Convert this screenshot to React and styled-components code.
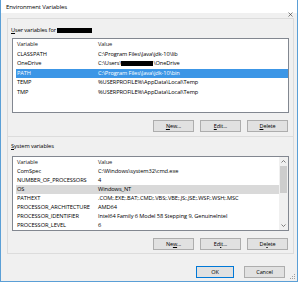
import React from 'react';
import styled, { createGlobalStyle } from 'styled-components';

const GlobalStyle = createGlobalStyle`
  html, body { margin: 0; padding: 0; background: #ffffff; }
  body { font-family: "Open Sans", "Noto Sans", sans-serif; font-size: 5.7px; letter-spacing: -0.1px; color: #000; }
  * { box-sizing: border-box; }
`;

const Window = styled.div`
  position: relative;
  width: 298px;
  height: 282px;
  border: 1px solid #5b9fd6;
  border-top: none;
  background: #f0f0f0;
  display: flex;
  flex-direction: column;
`;

const TitleBar = styled.div`
  height: 13px;
  flex: none;
  background: #ffffff;
  display: flex;
  align-items: center;
  justify-content: space-between;
  padding: 0 2px 0 5px;
  font-size: 6px;
`;

const CloseBox = styled.div`
  width: 9px;
  height: 9px;
  display: flex;
  align-items: center;
  justify-content: center;
  align-self: flex-end;
  margin-bottom: -6px;
`;

const Body = styled.div`
  flex: 1;
  display: flex;
  flex-direction: column;
  padding: 5px 3px 0 6px;
`;

const Frame = styled.div`
  height: ${p => p.$h}px;
  flex: none;
  border: 1px solid #dcdcdc;
  display: flex;
  flex-direction: column;
  padding: 0 4px;
  & + & { margin-top: -1px; }
`;

const Label = styled.div`
  height: 8px;
  line-height: 8px;
  margin: ${p => p.$mt}px 0 ${p => p.$mb}px -1px;
  display: flex;
  align-items: center;
  white-space: nowrap;
`;

const Redact = styled.span`
  display: inline-block;
  width: ${p => p.$w}px;
  height: 5px;
  margin-left: ${p => p.$ml || 0}px;
  background: #000;
  vertical-align: middle;
`;

const List = styled.div`
  position: relative;
  height: 75px;
  flex: none;
  background: #ffffff;
  border: 1px solid #828790;
  padding: 0 0 0 3px;
  overflow: hidden;
`;

const Row = styled.div`
  display: grid;
  grid-template-columns: 81px 181px;
  height: ${p => p.$h}px;
  align-items: center;
  background: ${p => (p.$sel === 'active' ? '#3c96e6' : p.$sel === 'inactive' ? '#d9d9d9' : 'transparent')};
  color: ${p => (p.$sel === 'active' ? '#ffffff' : p.$head ? '#202020' : '#000')};
  white-space: nowrap;
  line-height: 7px;
`;

const Cell = styled.div`
  padding-left: 1px;
  overflow: hidden;
  display: flex;
  align-items: center;
`;

const Scroll = styled.div`
  position: absolute;
  top: 0;
  right: 0;
  bottom: 0;
  width: 9px;
  background: #f0f0f0;
  display: flex;
  flex-direction: column;
  align-items: center;
`;

const Arrow = styled.div`
  height: 9px;
  width: 9px;
  display: flex;
  align-items: center;
  justify-content: center;
  flex: none;
`;

const Thumb = styled.div`
  width: 7px;
  height: 27px;
  background: #cdcdcd;
  flex: none;
`;

const Spacer = styled.div`
  flex: 1;
`;

const Buttons = styled.div`
  display: flex;
  justify-content: flex-end;
  gap: 6px;
  margin: 7px 1px 0 0;
`;

const Button = styled.div`
  width: ${p => p.$w || 41}px;
  height: 12px;
  background: #e1e1e1;
  border: 1px solid ${p => (p.$default ? '#0078d7' : '#adadad')};
  display: flex;
  align-items: center;
  justify-content: center;
  font-size: 5.5px;
  u { text-decoration-thickness: 0.5px; text-underline-offset: 0.8px; }
`;

const Footer = styled.div`
  display: flex;
  justify-content: flex-end;
  gap: 10px;
  margin: 12px 9px 0 0;
`;

const Grip = styled.div`
  position: absolute;
  right: 1px;
  bottom: 1px;
  width: 6px;
  height: 6px;
`;

const Up = () => (
  <svg width="5" height="3" viewBox="0 0 5 3"><path d="M0.5 2.5 L2.5 0.5 L4.5 2.5" fill="none" stroke="#606060" strokeWidth="0.8" /></svg>
);
const Down = () => (
  <svg width="5" height="3" viewBox="0 0 5 3"><path d="M0.5 0.5 L2.5 2.5 L4.5 0.5" fill="none" stroke="#606060" strokeWidth="0.8" /></svg>
);

const userRows = [
  ['CLASSPATH', 'C:\\Program Files\\Java\\jdk-10\\lib'],
  ['OneDrive', <>C:\Users\<Redact $w={32} />\OneDrive</>],
  ['PATH', 'C:\\Program Files\\Java\\jdk-10\\bin', 'active'],
  ['TEMP', '%USERPROFILE%\\AppData\\Local\\Temp'],
  ['TMP', '%USERPROFILE%\\AppData\\Local\\Temp'],
];

const sysRows = [
  ['ComSpec', 'C:\\Windows\\system32\\cmd.exe'],
  ['NUMBER_OF_PROCESSORS', '4'],
  ['OS', 'Windows_NT', 'inactive'],
  ['PATHEXT', '.COM;.EXE;.BAT;.CMD;.VBS;.VBE;.JS;.JSE;.WSF;.WSH;.MSC'],
  ['PROCESSOR_ARCHITECTURE', 'AMD64'],
  ['PROCESSOR_IDENTIFIER', 'Intel64 Family 6 Model 58 Stepping 9, GenuineIntel'],
  ['PROCESSOR_LEVEL', '6'],
];

const VarList = ({ rows, scroll, rowH, headH }) => (
  <List>
    <Row $head $h={headH}>
      <Cell>Variable</Cell>
      <Cell>Value</Cell>
    </Row>
    {rows.map(([k, v, sel]) => (
      <Row key={k} $sel={sel} $h={rowH}>
        <Cell>{k}</Cell>
        <Cell>{v}</Cell>
      </Row>
    ))}
    {scroll && (
      <Scroll>
        <Arrow><Up /></Arrow>
        <Thumb />
        <Spacer />
        <Arrow><Down /></Arrow>
      </Scroll>
    )}
  </List>
);

export default function App() {
  return (
    <>
      <GlobalStyle />
      <Window>
        <TitleBar>
          <span>Environment Variables</span>
          <CloseBox>
            <svg width="5" height="5" viewBox="0 0 5 5"><path d="M0.5 0.5 L4.5 4.5 M4.5 0.5 L0.5 4.5" stroke="#333" strokeWidth="0.6" /></svg>
          </CloseBox>
        </TitleBar>
        <Body>
          <Frame $h={119}>
            <Label $mt={7} $mb={4}><span><u>U</u>ser variables for</span><Redact $w={35} $ml={1.5} /></Label>
            <VarList rows={userRows} rowH={9.5} headH={10.5} />
            <Buttons>
              <Button><span><u>N</u>ew...</span></Button>
              <Button><span><u>E</u>dit...</span></Button>
              <Button><span><u>D</u>elete</span></Button>
            </Buttons>
          </Frame>
          <Frame $h={118}>
            <Label $mt={5} $mb={6}><span><u>S</u>ystem variables</span></Label>
            <VarList rows={sysRows} scroll rowH={9} headH={10} />
            <Buttons>
              <Button><span>Ne<u>w</u>...</span></Button>
              <Button><span>Ed<u>i</u>t...</span></Button>
              <Button><span>De<u>l</u>ete</span></Button>
            </Buttons>
          </Frame>
          <Footer>
            <Button $default $w={38}>OK</Button>
            <Button $w={41}>Cancel</Button>
          </Footer>
        </Body>
        <Grip>
          <svg width="6" height="6" viewBox="0 0 6 6" fill="#a0a0a0">
            <rect x="4" y="0" width="1" height="1" />
            <rect x="2" y="2" width="1" height="1" /><rect x="4" y="2" width="1" height="1" />
            <rect x="0" y="4" width="1" height="1" /><rect x="2" y="4" width="1" height="1" /><rect x="4" y="4" width="1" height="1" />
          </svg>
        </Grip>
      </Window>
    </>
  );
}
